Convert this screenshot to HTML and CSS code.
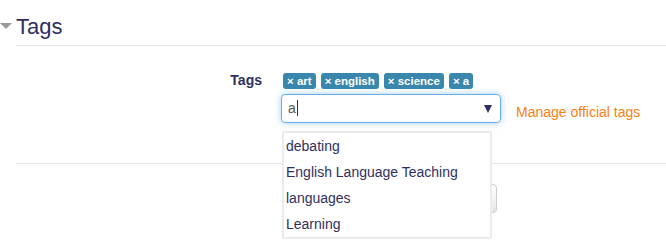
FILE: index.html
```html
<!DOCTYPE html>
<html lang="en">
<head>
    <meta charset="UTF-8">
    <meta name="viewport" content="width=device-width, initial-scale=1.0">
    <title>Tags</title>
    <link rel="stylesheet" href="styles.css">
</head>
<body>
  <div class="legend">
    <span class="toggle"></span>
    <h2>Tags</h2>
  </div>

  <div class="fieldset">
    <div class="form-row">
      <label class="form-label">Tags</label>
      <div class="form-field">
        <div class="badges">
          <span class="badge">× art</span>
          <span class="badge">× english</span>
          <span class="badge">× science</span>
          <span class="badge">× a</span>
        </div>
        <div class="input-row">
          <div class="select-box">
            <span class="typed">a</span><span class="caret"></span>
            <span class="arrow"></span>
          </div>
          <a class="manage" href="#">Manage official tags</a>
        </div>
        <ul class="suggestions">
          <li>debating</li>
          <li>English Language Teaching</li>
          <li>languages</li>
          <li>Learning</li>
        </ul>
      </div>
    </div>
  </div>

  <div class="buttons">
    <button class="btn" aria-label="Save changes"></button>
  </div>
</body>
</html>
```

FILE: styles.css
```css
html, body {
  min-height: 251px;
}
body {
  margin: 0;
  font-family: "Liberation Sans", Arial, sans-serif;
  font-size: 14px;
  color: #2f2f5f;
  background: #fff;
}
.legend {
  display: flex;
  align-items: flex-start;
  margin-top: 15px;
}
.toggle {
  width: 0;
  height: 0;
  margin: 8px 4px 0 0;
  border-left: 6px solid transparent;
  border-right: 6px solid transparent;
  border-top: 6px solid #999;
}
h2 {
  flex: 1;
  margin: 0;
  font-size: 22px;
  font-weight: normal;
  line-height: 24px;
  padding-bottom: 6px;
  border-bottom: 1px solid #e5e5e5;
  color: #2f2f5f;
}
.fieldset {
  margin-left: 16px;
  padding: 26px 0 40px;
  border-bottom: 1px solid #e5e5e5;
}
.form-row {
  display: grid;
  grid-template-columns: 246px 1fr;
  column-gap: 20px;
}
.form-label {
  text-align: right;
  font-weight: bold;
  line-height: 17px;
}
.form-field {
  position: relative;
}
.badges {
  display: flex;
  gap: 5px;
  padding: 1px 0 0 1px;
}
.badge {
  display: inline-block;
  height: 16px;
  line-height: 16px;
  padding: 0 4px;
  font-size: 11.5px;
  font-weight: bold;
  color: #fff;
  background: #3a87ad;
  border-radius: 3px;
}
.input-row {
  display: flex;
  align-items: center;
  margin-top: 5px;
  margin-left: -1px;
}
.select-box {
  position: relative;
  width: 212px;
  height: 27px;
  line-height: 27px;
  padding-left: 6px;
  border: 1px solid #66afe9;
  border-radius: 4px;
  box-shadow: 0 0 6px rgba(102, 175, 233, 0.6);
  color: #555;
}
.caret {
  display: inline-block;
  width: 1px;
  height: 16px;
  margin-left: 1px;
  vertical-align: -3px;
  background: #333;
}
.arrow {
  position: absolute;
  right: 8px;
  top: 10px;
  width: 0;
  height: 0;
  border-left: 4px solid transparent;
  border-right: 4px solid transparent;
  border-top: 8px solid #2f2f5f;
}
.manage {
  margin-left: 15px;
  padding-top: 7px;
  color: #f98012;
  text-decoration: none;
}
.suggestions {
  position: absolute;
  top: 59px;
  left: 0;
  width: 204px;
  margin: 0;
  padding: 0 0 0 2px;
  list-style: none;
  background: #fff;
  border: 2px solid #ebebeb;
  border-radius: 2px;
}
.suggestions li {
  line-height: 26px;
  color: #2f2f5f;
}
.buttons {
  display: flex;
  margin: 20px 0 0 282px;
}
.btn {
  width: 215px;
  height: 29px;
  background: linear-gradient(#fff, #e6e6e6);
  border: 1px solid #ccc;
  border-radius: 4px;
}
```
